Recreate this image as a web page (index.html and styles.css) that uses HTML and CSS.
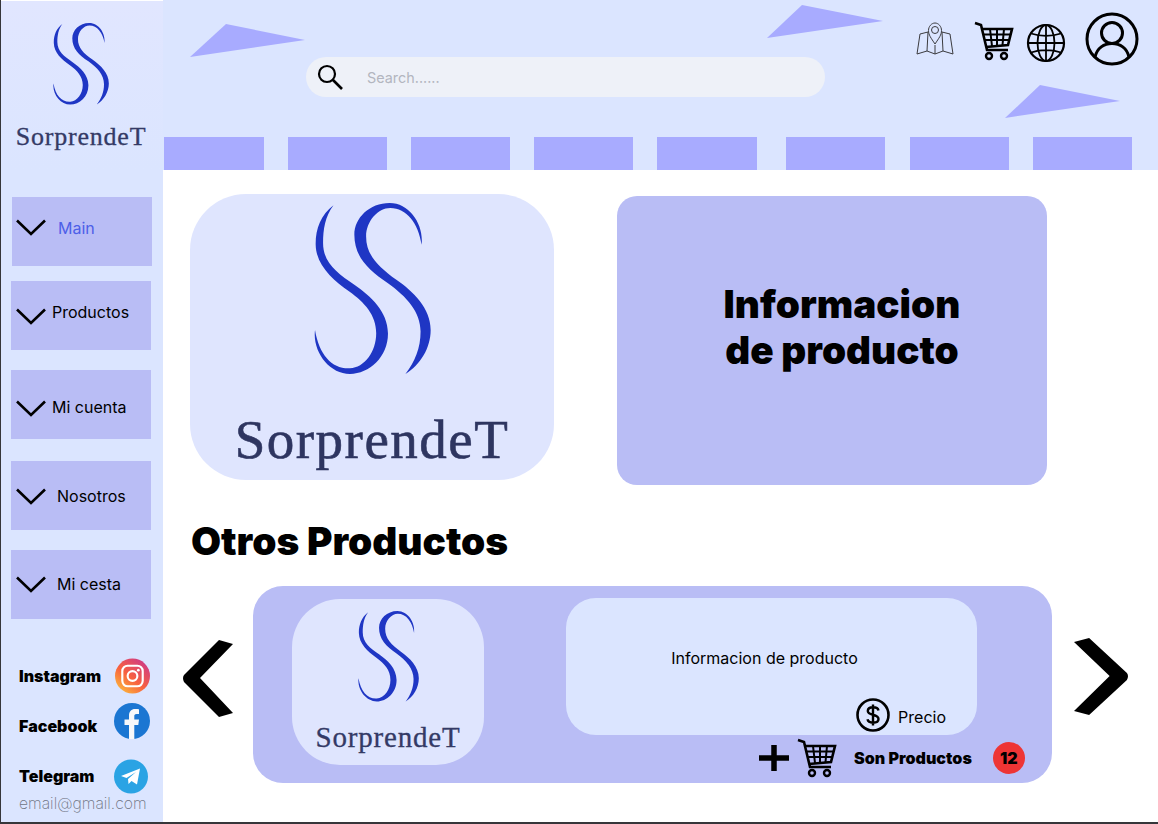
FILE: index.html
```html
<!DOCTYPE html>
<html lang="es">

<head>
  <meta charset="utf-8">
  <title>SorprendeT</title>
  <link rel="stylesheet" href="styles.css">
</head>

<body>
  <svg class="sprite">
    <symbol id="logo-s" viewBox="5 5 348 515" preserveAspectRatio="none">
      <path d="M63 12C25 40 9 85 10 130C11 190 60 235 110 270C155 303 190 340 190 395C190 450 155 498 112 500C60 503 20 460 8 385C0 450 50 517 112 517C170 517 226 465 225 395C224 330 175 285 125 250C75 215 32 185 32 125C32 85 38 45 63 12Z" />
      <path d="M325 130C332 70 290 5 230 5C170 5 125 50 125 100C125 165 165 205 225 245C280 285 322 330 322 390C322 440 305 480 277 517C320 490 352 440 352 385C352 320 300 270 250 235C195 195 160 160 160 105C160 60 195 20 232 20C280 20 315 65 325 130Z" />
    </symbol>
    <symbol id="chevron" viewBox="0 0 30 17">
      <path d="M1 1.500L15 15L29 1.500" fill="none" stroke="#000" stroke-width="2.600" />
    </symbol>
    <symbol id="cart" viewBox="0 0 40 40">
      <g fill="none" stroke="#000">
        <path d="M1 2L7 4L13 29H34" stroke-width="2.600" />
        <path d="M8 8H38L34 24L12 26" stroke-width="2.600" />
        <path d="M9 13.500H37M10 19H36M16 8L18 25M23 8V25M30 8L28.500 24" stroke-width="2" />
        <circle cx="15" cy="35" r="3" stroke-width="2.400" />
        <circle cx="30" cy="35" r="3" stroke-width="2.400" />
      </g>
    </symbol>
    <symbol id="arrow" viewBox="0 0 50 77" preserveAspectRatio="none">
      <path d="M36 0L50 4L17 38L50 73L36 77L1 42Q-1 38 1 35Z" />
    </symbol>
  </svg>

  <div class="frame">
    <aside class="sidebar">
      <div class="brand">
        <svg class="brand-mark">
          <use href="#logo-s"></use>
        </svg>
        <div class="brand-name">SorprendeT</div>
      </div>

      <nav class="nav">
        <a class="nav-item nav-main">
          <svg class="chev"><use href="#chevron"></use></svg>
          <span class="nav-label">Main</span>
        </a>
        <a class="nav-item nav-products">
          <svg class="chev"><use href="#chevron"></use></svg>
          <span class="nav-label">Productos</span>
        </a>
        <a class="nav-item nav-account">
          <svg class="chev"><use href="#chevron"></use></svg>
          <span class="nav-label">Mi cuenta</span>
        </a>
        <a class="nav-item nav-us">
          <svg class="chev"><use href="#chevron"></use></svg>
          <span class="nav-label">Nosotros</span>
        </a>
        <a class="nav-item nav-basket">
          <svg class="chev"><use href="#chevron"></use></svg>
          <span class="nav-label">Mi cesta</span>
        </a>
      </nav>

      <div class="social">
        <div class="social-row">
          <span>Instagram</span>
          <svg class="social-icon" viewBox="0 0 36 36">
            <defs>
              <linearGradient id="insta" x1="0.1" y1="1" x2="0.9" y2="0">
                <stop offset="0" stop-color="#fdc23c" />
                <stop offset="0.45" stop-color="#f8613f" />
                <stop offset="1" stop-color="#c9358f" />
              </linearGradient>
            </defs>
            <circle cx="18" cy="18" r="18" fill="url(#insta)" />
            <rect x="7.500" y="7.500" width="21" height="21" rx="5.500" fill="none" stroke="#fff" stroke-width="2.200" />
            <circle cx="18" cy="18" r="5" fill="none" stroke="#fff" stroke-width="2.200" />
            <circle cx="24" cy="12" r="1.400" fill="#fff" />
          </svg>
        </div>
        <div class="social-row social-row-fb">
          <span>Facebook</span>
          <svg class="social-icon social-icon-fb" viewBox="0 0 36 36">
            <circle cx="18" cy="18" r="18" fill="#1b76d2" />
            <path d="M15 36V22H10.500V16.500H15V12.500C15 8.500 17.500 6 21 6C22.800 6 24.500 6.200 25 6.300V11H22.500C20.700 11 20.300 12 20.300 13.200V16.500H25L24.300 22H20.300V36Z" fill="#f7f8fa" />
          </svg>
        </div>
        <div class="social-row social-row-tg">
          <span>Telegram</span>
          <svg class="social-icon social-icon-tg" viewBox="0 0 34 34">
            <circle cx="17" cy="17" r="17" fill="#2aa3e4" />
            <path d="M7 16.500L26 9L23 25L17.500 21.500L14.500 24.500L14 19.500L22 12.500L12.500 18.500Z" fill="#fff" />
          </svg>
        </div>
        <div class="email">email@gmail.com</div>
      </div>
    </aside>

    <div class="page">
      <header class="header">
        <svg class="shards" viewBox="0 0 995 170">
          <polygon points="27,57 63,24 142,40" />
          <polygon points="604,38 639,5 720,21" />
          <polygon points="842,118 877,85 957,101" />
        </svg>

        <div class="header-top">
          <div class="search">
            <svg class="search-icon" viewBox="0 0 26 26">
              <circle cx="10" cy="10" r="8" fill="none" stroke="#000" stroke-width="2.200" />
              <path d="M16 16L25 25" stroke="#000" stroke-width="2.600" />
            </svg>
            <span class="search-text">Search......</span>
          </div>

          <div class="header-icons">
            <svg class="icon-map" viewBox="0 0 38 36">
              <g fill="none" stroke="#3b3b3f" stroke-width="1">
                <path d="M12 10L4 12L1 32L11 29L19 32L27 29L37 32L34 12L26 10" />
                <path d="M11 29L12 10M27 29L26 10M19 32V23" />
                <path d="M19 22C15 16 12.500 13 12.500 8.500C12.500 4.500 15.500 1 19 1C22.500 1 25.500 4.500 25.500 8.500C25.500 13 23 16 19 22Z" />
                <circle cx="19" cy="8" r="3.500" />
              </g>
            </svg>
            <svg class="icon-cart"><use href="#cart"></use></svg>
            <svg class="icon-globe" viewBox="0 0 40 40">
              <g fill="none" stroke="#000" stroke-width="1.800">
                <circle cx="20" cy="20" r="18" stroke-width="2.200" />
                <ellipse cx="20" cy="20" rx="8.500" ry="18" />
                <path d="M20 2V38M2 20H38M5 10.500C14 13.500 26 13.500 35 10.500M5 29.500C14 26.500 26 26.500 35 29.500" />
              </g>
            </svg>
            <svg class="icon-user" viewBox="0 0 54 54">
              <g fill="none" stroke="#000" stroke-width="3">
                <circle cx="27" cy="27" r="25" />
                <circle cx="27" cy="21" r="10.500" />
                <path d="M10 45C12 36 19 31.500 27 31.500C35 31.500 42 36 44 45" />
              </g>
            </svg>
          </div>
        </div>

        <div class="tabs">
          <div class="tab tab-wide"></div>
          <div class="tab"></div>
          <div class="tab"></div>
          <div class="tab"></div>
          <div class="tab tab-wide"></div>
          <div class="tab tab-gap"></div>
          <div class="tab tab-nudge"></div>
          <div class="tab"></div>
        </div>
      </header>

      <main class="content">
        <section class="product">
          <div class="logo-card">
            <svg class="logo-card-mark"><use href="#logo-s"></use></svg>
            <div class="logo-card-name">SorprendeT</div>
          </div>
          <div class="info-card">
            <h1>Informacion<br>de producto</h1>
          </div>
        </section>

        <h2 class="section-title">Otros Productos</h2>

        <section class="carousel">
          <svg class="arrow"><use href="#arrow"></use></svg>

          <div class="panel">
            <div class="mini-logo">
              <svg class="mini-logo-mark"><use href="#logo-s"></use></svg>
              <div class="mini-logo-name">SorprendeT</div>
            </div>

            <div class="panel-right">
              <div class="mini-info">
                <p>Informacion de producto</p>
                <div class="price">
                  <svg class="price-icon" viewBox="0 0 34 34">
                    <circle cx="17" cy="17" r="15.500" fill="none" stroke="#000" stroke-width="2.600" />
                    <path d="M22.500 12.500C22 10 20 9.300 17 9.300C14 9.300 11.800 10.600 11.800 13C11.800 18 22.500 15.500 22.500 21C22.500 23.500 20 24.700 17 24.700C14 24.700 12 23.700 11.500 21.300M17 6.500V27.500" fill="none" stroke="#000" stroke-width="2.400" />
                  </svg>
                  <span class="price-label">Precio</span>
                </div>
              </div>

              <div class="panel-actions">
                <svg class="plus" viewBox="0 0 30 26">
                  <path d="M0 13H30M15 0V26" stroke="#000" stroke-width="5.500" />
                </svg>
                <svg class="action-cart"><use href="#cart"></use></svg>
                <span class="action-label">Son Productos</span>
                <span class="badge">12</span>
              </div>
            </div>
          </div>

          <svg class="arrow arrow-next"><use href="#arrow"></use></svg>
        </section>
      </main>
    </div>
  </div>
</body>

</html>
```

FILE: styles.css
```css
* {
  margin: 0;
  padding: 0;
  box-sizing: border-box;
}

body {
  width: 1158px;
  height: 824px;
  overflow: hidden;
  background: #36363a;
  font-family: Inter, "Liberation Sans", sans-serif;
  color: #000;
}

.sprite {
  display: none;
}

.frame {
  display: flex;
  height: 822px;
  margin-left: 1px;
  background: #fff;
}

/* sidebar */

.sidebar {
  display: flex;
  flex-direction: column;
  width: 162px;
  background: #dbe5ff;
}

.brand {
  display: flex;
  flex-direction: column;
  align-items: center;
  height: 170px;
  padding-top: 22px;
  padding-right: 2px;
  border-top: 1px solid #fff;
  background: linear-gradient(#e1e6ff, #dbe5ff);
}

.brand-mark {
  width: 56px;
  height: 82px;
  fill: #1f36c4;
}

.brand-name {
  margin-top: 17px;
  font-family: "Liberation Serif", serif;
  font-size: 26px;
  line-height: 30px;
  letter-spacing: 0.8px;
  color: #343a66;
  -webkit-text-stroke: 0.3px #343a66;
}

.nav {
  display: flex;
  flex-direction: column;
}

.nav-item {
  display: flex;
  align-items: flex-start;
  width: 140px;
  height: 69px;
  margin-left: 10px;
  background: #b9bdf5;
  font-size: 16px;
  line-height: 20px;
}

.chev {
  flex: none;
  width: 30px;
  height: 17px;
  margin-left: 5px;
}

.nav-main {
  margin-top: 27px;
  margin-left: 11px;
}

.nav-main .chev {
  margin-left: 4px;
  margin-top: 22px;
}

.nav-main .nav-label {
  margin-left: 12px;
  margin-top: 21px;
  color: #4d5fe8;
}

.nav-products {
  margin-top: 15px;
}

.nav-products .chev {
  margin-top: 27px;
}

.nav-products .nav-label {
  margin-left: 6px;
  margin-top: 21px;
}

.nav-account {
  margin-top: 20px;
}

.nav-account .chev {
  margin-top: 30px;
}

.nav-account .nav-label {
  margin-left: 6px;
  margin-top: 27px;
}

.nav-us {
  margin-top: 22px;
}

.nav-us .chev {
  margin-top: 27px;
}

.nav-us .nav-label {
  margin-left: 11px;
  margin-top: 25px;
}

.nav-basket {
  margin-top: 20px;
}

.nav-basket .chev {
  margin-top: 26px;
}

.nav-basket .nav-label {
  margin-left: 11px;
  margin-top: 24px;
}

.social {
  margin-top: 39px;
  padding-left: 18px;
  font-size: 16px;
  font-weight: 900;
  line-height: 20px;
}

.social-row {
  display: flex;
  align-items: center;
  height: 36px;
}

.social-icon {
  flex: none;
  width: 35px;
  height: 36px;
  margin-left: auto;
  margin-right: 13px;
}

.social-row-fb {
  margin-top: 9px;
}

.social-row-fb span {
  padding-top: 9px;
}

.social-icon-fb {
  width: 36px;
  margin-right: 13px;
}

.social-row-tg {
  margin-top: 19px;
}

.social-icon-tg {
  width: 34px;
  height: 35px;
  margin-right: 15px;
}

.email {
  margin-top: 0;
  font-size: 15.700px;
  font-weight: 200;
  line-height: 20px;
  color: #6f7482;
  white-space: nowrap;
}

/* header */

.page {
  flex: 1;
  min-width: 0;
}

.header {
  position: relative;
  height: 170px;
  background: #dbe5ff;
}

.shards {
  position: absolute;
  top: 0;
  left: 0;
  width: 995px;
  height: 170px;
  fill: #a8abff;
}

.header-top {
  position: relative;
  display: flex;
  align-items: flex-start;
  height: 137px;
}

.search {
  display: flex;
  align-items: center;
  width: 519px;
  height: 40px;
  margin-top: 57px;
  margin-left: 143px;
  border-radius: 20px;
  background: #eef1f8;
}

.search-icon {
  width: 26px;
  height: 26px;
  margin-left: 11px;
}

.search-text {
  margin-left: 24px;
  font-size: 14.400px;
  color: #b3b6bf;
}

.header-icons {
  display: flex;
  align-items: flex-start;
  margin-left: 91px;
}

.icon-map {
  width: 38px;
  height: 36px;
  margin-top: 22px;
}

.icon-cart {
  width: 40px;
  height: 40px;
  margin-top: 21px;
  margin-left: 20px;
}

.icon-globe {
  width: 40px;
  height: 40px;
  margin-top: 23px;
  margin-left: 12px;
}

.icon-user {
  width: 54px;
  height: 54px;
  margin-top: 12px;
  margin-left: 19px;
}

.tabs {
  position: relative;
  display: flex;
  gap: 24px;
  padding-left: 1px;
}

.tab {
  width: 99px;
  height: 33px;
  background: #a8abff;
}

.tab-wide {
  width: 100px;
}

.tab-gap {
  margin-left: 5px;
}

.tab-nudge {
  margin-left: 1px;
}

/* main */

.content {
  padding: 24px 0 0 27px;
}

.product {
  display: flex;
  align-items: flex-start;
}

.logo-card {
  display: flex;
  flex-direction: column;
  align-items: center;
  width: 364px;
  height: 286px;
  padding-top: 9px;
  border-radius: 56px;
  background: #dfe5fe;
}

.logo-card-mark {
  width: 117px;
  height: 172px;
  fill: #1f36c4;
}

.logo-card-name {
  margin-top: 35px;
  font-family: "Liberation Serif", serif;
  font-size: 55px;
  line-height: 60px;
  letter-spacing: 1.500px;
  color: #2e3560;
  -webkit-text-stroke: 0.6px #2e3560;
}

.info-card {
  display: flex;
  justify-content: center;
  width: 430px;
  height: 289px;
  margin-top: 2px;
  margin-left: 63px;
  padding-top: 85px;
  padding-left: 20px;
  border-radius: 20px;
  background: #b9bdf5;
}

.info-card h1 {
  font-size: 38.700px;
  font-weight: 900;
  line-height: 46px;
  text-align: center;
}

.section-title {
  margin-top: 33px;
  padding-left: 1px;
  font-size: 38.800px;
  font-weight: 900;
  line-height: 46px;
}

.carousel {
  display: flex;
  align-items: flex-start;
  margin-top: 22px;
  margin-left: -7px;
}

.arrow {
  flex: none;
  width: 50px;
  height: 77px;
  margin-top: 54px;
}

.arrow-next {
  width: 54px;
  margin-top: 52px;
  margin-left: 22px;
  transform: scaleX(-1);
}

.panel {
  display: flex;
  align-items: flex-start;
  width: 799px;
  height: 197px;
  margin-left: 20px;
  padding: 12px 0 0 39px;
  border-radius: 30px;
  background: #b9bdf5;
}

.mini-logo {
  display: flex;
  flex-direction: column;
  align-items: center;
  flex: none;
  width: 192px;
  height: 166px;
  margin-top: 1px;
  padding-top: 12px;
  border-radius: 48px;
  background: #dfe5fe;
}

.mini-logo-mark {
  width: 61px;
  height: 91px;
  fill: #1f36c4;
}

.mini-logo-name {
  margin-top: 19px;
  font-family: "Liberation Serif", serif;
  font-size: 29px;
  line-height: 32px;
  letter-spacing: 0.8px;
  color: #343a66;
  -webkit-text-stroke: 0.3px #343a66;
}

.panel-right {
  margin-left: 82px;
}

.mini-info {
  display: flex;
  flex-direction: column;
  width: 411px;
  height: 137px;
  border-radius: 30px;
  background: #dbe5ff;
  font-size: 16px;
  line-height: 20px;
}

.mini-info p {
  margin-top: 50px;
  padding-right: 14px;
  text-align: center;
}

.price {
  display: flex;
  align-items: center;
  align-self: flex-end;
  gap: 8px;
  margin-top: 30px;
  margin-right: 31px;
}

.price-icon {
  width: 34px;
  height: 34px;
}

.price-label {
  padding-top: 3px;
}

.panel-actions {
  display: flex;
  align-items: center;
  height: 40px;
  margin-top: 3px;
  padding-left: 193px;
}

.plus {
  width: 30px;
  height: 26px;
}

.action-cart {
  width: 40px;
  height: 40px;
  margin-left: 8px;
}

.action-label {
  margin-left: 17px;
  font-size: 16.100px;
  font-weight: 900;
  white-space: nowrap;
}

.badge {
  display: flex;
  align-items: center;
  justify-content: center;
  flex: none;
  width: 32px;
  height: 32px;
  margin-left: 21px;
  border-radius: 50%;
  background: #ee3535;
  font-size: 16px;
  font-weight: 900;
}
```
